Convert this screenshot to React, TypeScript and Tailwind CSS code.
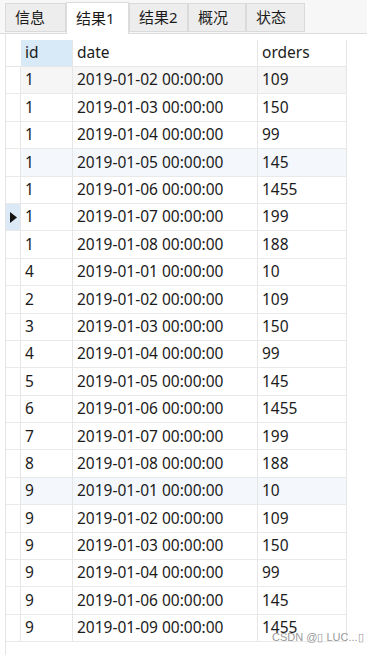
import React from "react";

const rows: [string, string, string][] = [
  ["1", "2019-01-02 00:00:00", "109"],
  ["1", "2019-01-03 00:00:00", "150"],
  ["1", "2019-01-04 00:00:00", "99"],
  ["1", "2019-01-05 00:00:00", "145"],
  ["1", "2019-01-06 00:00:00", "1455"],
  ["1", "2019-01-07 00:00:00", "199"],
  ["1", "2019-01-08 00:00:00", "188"],
  ["4", "2019-01-01 00:00:00", "10"],
  ["2", "2019-01-02 00:00:00", "109"],
  ["3", "2019-01-03 00:00:00", "150"],
  ["4", "2019-01-04 00:00:00", "99"],
  ["5", "2019-01-05 00:00:00", "145"],
  ["6", "2019-01-06 00:00:00", "1455"],
  ["7", "2019-01-07 00:00:00", "199"],
  ["8", "2019-01-08 00:00:00", "188"],
  ["9", "2019-01-01 00:00:00", "10"],
  ["9", "2019-01-02 00:00:00", "109"],
  ["9", "2019-01-03 00:00:00", "150"],
  ["9", "2019-01-04 00:00:00", "99"],
  ["9", "2019-01-06 00:00:00", "145"],
  ["9", "2019-01-09 00:00:00", "1455"],
];

const tabs = ["信息", "结果1", "结果2", "概况", "状态"];
const tabWidths = ["w-[61px]", "w-[63px]", "w-[59px]", "w-[58px]", "w-[59px]"];

export default function App() {
  return (
    <div
      className="relative w-[367px] h-[655px] bg-white overflow-hidden text-[#1b1b1b]"
      style={{ fontFamily: '"Noto Sans", "Noto Sans CJK SC", sans-serif' }}
    >
      {/* Tabs */}
      <div className="h-[34px] bg-[#f7f7f7] border-b border-[#dcdcdc] flex items-end pl-[5px]">
        {tabs.map((t, i) =>
          i === 1 ? (
            <div
              key={t}
              className={`${tabWidths[i]} h-[32px] -mb-px bg-white border border-b-0 border-[#dcdcdc] flex items-center pl-[9px] text-[15px] leading-none`}
            >
              {t}
            </div>
          ) : (
            <div
              key={t}
              className={`${tabWidths[i]} h-[29px] mb-[1px] bg-[#ededed] border border-[#dadada] flex items-center pl-[9px] text-[15px] leading-none`}
            >
              {t}
            </div>
          )
        )}
      </div>

      {/* Grid */}
      <div className="ml-[5px] border-l border-[#e4e4e4] h-[621px] pt-[6px]">
        <div className="w-[341px] text-[15.5px] leading-none">
          {/* header */}
          <div className="flex h-[27px] border-b border-[#e6e6e6]">
            <div className="w-[15px] shrink-0" />
            <div className="w-[52px] bg-[#d8e9f7] border-r border-[#e6e6e6] flex items-center pl-[4px]">id</div>
            <div className="w-[185px] border-r border-[#e6e6e6] flex items-center pl-[4px]">date</div>
            <div className="w-[89px] border-r border-[#e6e6e6] flex items-center pl-[4px]">orders</div>
          </div>
          {rows.map((r, i) => {
            const selected = i === 5;
            const bg =
              i === 0 ? "bg-[#f6f6f6]" : i === 3 || i === 15 ? "bg-[#f4f8fd]" : "bg-white";
            return (
              <div key={i} className={`flex h-[27.4px] border-b border-[#e9e9e9] ${bg}`}>
                <div
                  className={`w-[15px] shrink-0 border-r border-[#e6e6e6] flex items-center justify-center ${
                    selected ? "bg-[#dbe9f6]" : "bg-white"
                  }`}
                >
                  {selected && (
                    <svg width="7" height="11" viewBox="0 0 7 11">
                      <path d="M0 0 L7 5.5 L0 11 Z" fill="#111" />
                    </svg>
                  )}
                </div>
                <div className="w-[52px] border-r border-[#e6e6e6] flex items-center pl-[4px]">{r[0]}</div>
                <div className="w-[185px] border-r border-[#e6e6e6] flex items-center pl-[4px]">{r[1]}</div>
                <div className="w-[89px] border-r border-[#e6e6e6] flex items-center pl-[4px]">{r[2]}</div>
              </div>
            );
          })}
        </div>
      </div>

      <div
        className="absolute left-[272px] top-[632px] text-[11px] leading-none text-[#9a9a9a]"
        style={{ fontFamily: '"Liberation Sans", sans-serif' }}
      >
        CSDN @▯ LUC...▯
      </div>
    </div>
  );
}
